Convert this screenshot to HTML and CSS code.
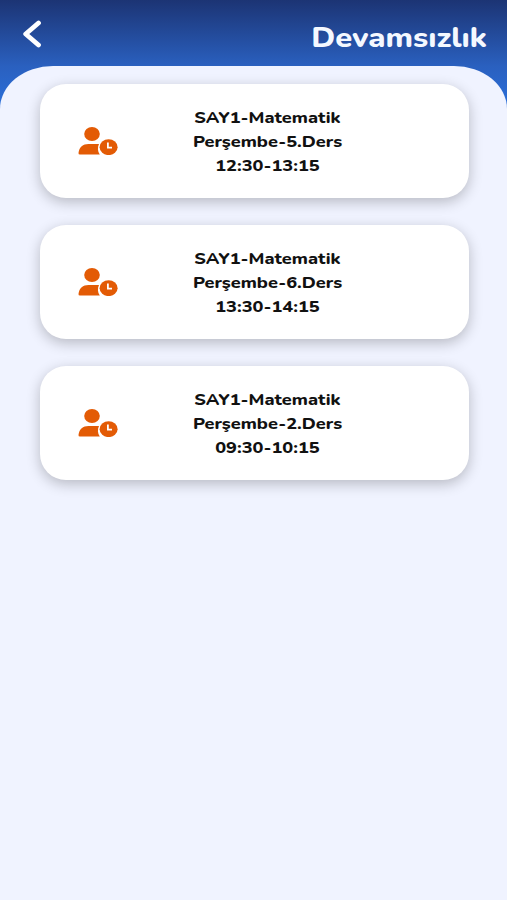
FILE: index.html
```html
<!DOCTYPE html>
<html lang="tr">
<head>
    <meta charset="UTF-8">
    <title>Devamsızlık</title>
    <link rel="stylesheet" href="styles.css">
</head>
<body>
    <svg width="0" height="0" class="defs">
        <symbol id="user-clock" viewBox="0 0 40 28">
            <ellipse cx="14" cy="7" rx="7.8" ry="7"/>
            <path d="M2 27.6Q0.3 27.6 0.5 26C1.2 20 5 17 10.5 17H21C19.4 20.3 19.5 24.5 21.8 27.6Z"/>
            <ellipse cx="30.6" cy="20.2" rx="9" ry="7.9"/>
            <path class="hand" d="M29.9 15.6V20.6H34"/>
        </symbol>
    </svg>
    <header class="header">
        <button class="back" aria-label="Geri">
            <svg width="20" height="28" viewBox="0 0 20 28">
                <path d="M16.5 3L3.7 14L16.5 25"/>
            </svg>
        </button>
        <h1 class="title">Devamsızlık</h1>
    </header>
    <main class="content">
        <div class="card">
            <svg class="icon"><use href="#user-clock"/></svg>
            <div class="info">
                <p>SAY1-Matematik</p>
                <p>Perşembe-5.Ders</p>
                <p>12:30-13:15</p>
            </div>
        </div>
        <div class="card">
            <svg class="icon"><use href="#user-clock"/></svg>
            <div class="info">
                <p>SAY1-Matematik</p>
                <p>Perşembe-6.Ders</p>
                <p>13:30-14:15</p>
            </div>
        </div>
        <div class="card">
            <svg class="icon"><use href="#user-clock"/></svg>
            <div class="info">
                <p>SAY1-Matematik</p>
                <p>Perşembe-2.Ders</p>
                <p>09:30-10:15</p>
            </div>
        </div>
    </main>
</body>
</html>
```
FILE: styles.css
```css
* {
    box-sizing: border-box;
    margin: 0;
}

body {
    min-height: 900px;
    display: flex;
    flex-direction: column;
    font-family: Nunito, "Open Sans", sans-serif;
    background: linear-gradient(#1c3474 0, #2a60bf 66px, #2b70dc 110px);
}

.defs {
    display: block;
}

.header {
    height: 66px;
    padding: 2px 20px 0 22px;
    display: flex;
    align-items: center;
    justify-content: space-between;
}

.back {
    padding: 0;
    border: none;
    background: none;
    cursor: pointer;
}

.back svg {
    display: block;
    fill: none;
    stroke: #fff;
    stroke-width: 4.8;
    stroke-linecap: round;
    stroke-linejoin: round;
}

.title {
    padding-top: 7px;
    font-size: 28px;
    font-weight: 800;
    color: #f4f8ff;
    transform: scaleX(1.105);
    transform-origin: right;
}

.content {
    flex: 1;
    padding: 18px 38px 0 40px;
    display: flex;
    flex-direction: column;
    gap: 27px;
    background-color: #f0f3ff;
    border-radius: 53px 53px 0 0 / 43px 43px 0 0;
}

.card {
    height: 114px;
    padding: 0 38px;
    display: grid;
    grid-template-columns: 40px 1fr 14px;
    align-items: center;
    background-color: #fff;
    border-radius: 26px;
    box-shadow: 0 4px 14px rgba(0, 0, 0, 0.24);
}

.icon {
    width: 40px;
    height: 28px;
    fill: #e35b05;
}

.hand {
    fill: none;
    stroke: #fff;
    stroke-width: 1.8;
}

.info {
    padding-top: 2px;
    text-align: center;
    font-size: 16.5px;
    font-weight: 800;
    line-height: 24px;
    color: #111;
    transform: scaleX(1.1);
}
```
